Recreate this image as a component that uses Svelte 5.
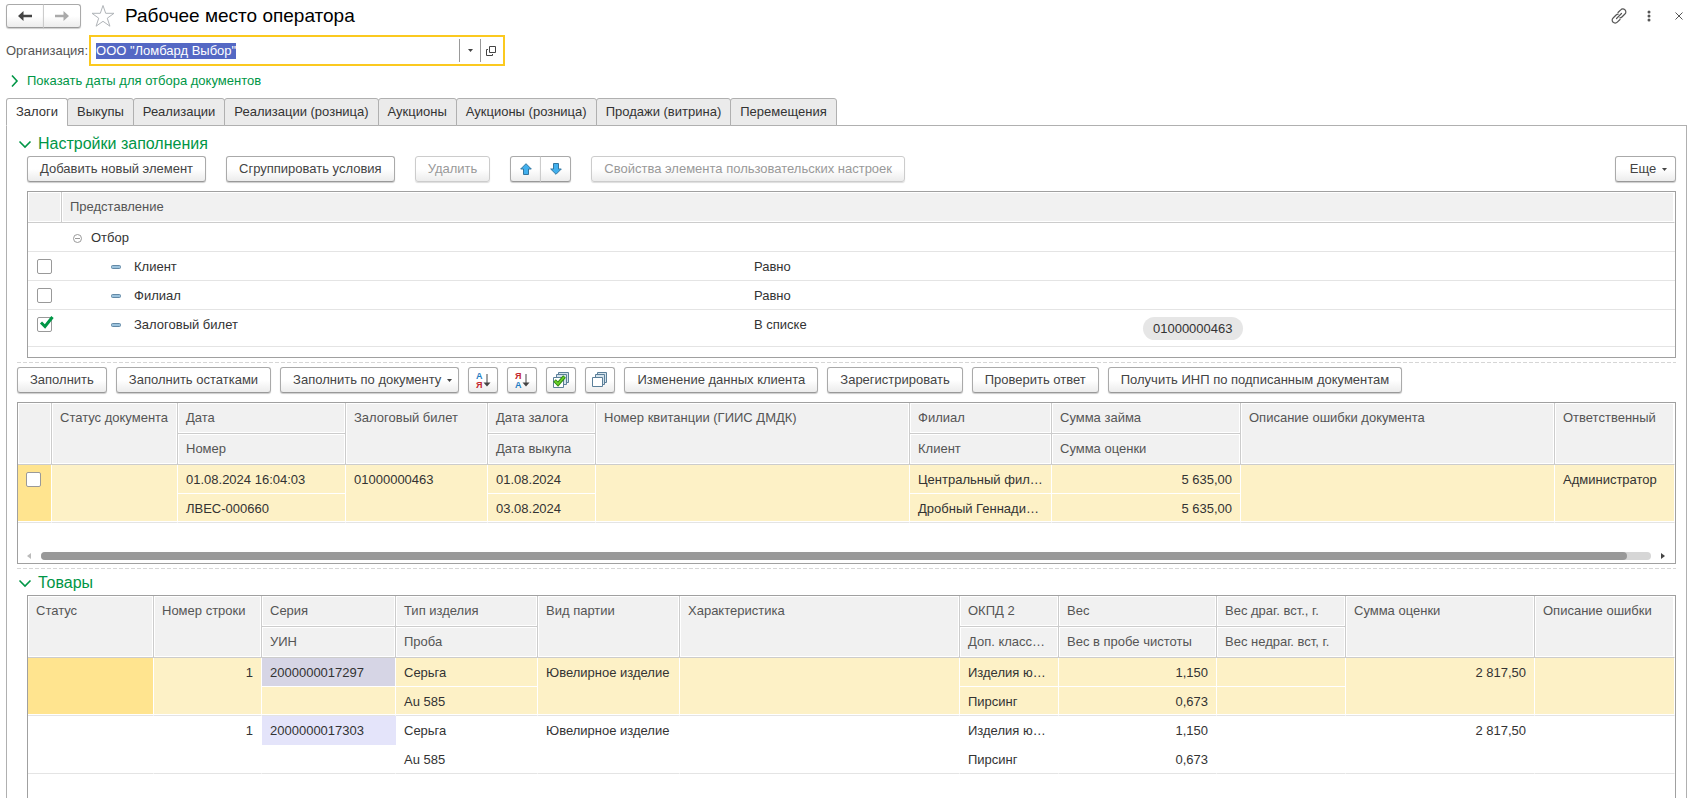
<script>
  const tabs = [
    'Залоги',
    'Выкупы',
    'Реализации',
    'Реализации (розница)',
    'Аукционы',
    'Аукционы (розница)',
    'Продажи (витрина)',
    'Перемещения'
  ];
  let activeTab = 'Залоги';

  let organization = 'ООО "Ломбард Выбор"';

  const filters = [
    { name: 'Клиент', op: 'Равно', value: '', on: false },
    { name: 'Филиал', op: 'Равно', value: '', on: false },
    { name: 'Залоговый билет', op: 'В списке', value: '01000000463', on: true }
  ];

  // bottom: undefined means that the column spans both header lines
  const docColumns = [
    { key: 'mark', top: '', width: 34 },
    { key: 'status', top: 'Статус документа', width: 126 },
    { key: 'date', top: 'Дата', bottom: 'Номер', width: 168 },
    { key: 'ticket', top: 'Залоговый билет', width: 142 },
    { key: 'pledge', top: 'Дата залога', bottom: 'Дата выкупа', width: 108 },
    { key: 'receipt', top: 'Номер квитанции (ГИИС ДМДК)', width: 314 },
    { key: 'branch', top: 'Филиал', bottom: 'Клиент', width: 142 },
    { key: 'sum', top: 'Сумма займа', bottom: 'Сумма оценки', width: 189, num: true },
    { key: 'error', top: 'Описание ошибки документа' },
    { key: 'user', top: 'Ответственный', width: 120 }
  ];
  const docs = [
    {
      date: ['01.08.2024 16:04:03', 'ЛВЕС-000660'],
      ticket: ['01000000463'],
      pledge: ['01.08.2024', '03.08.2024'],
      branch: ['Центральный фил…', 'Дробный Геннади…'],
      sum: ['5 635,00', '5 635,00'],
      user: ['Администратор']
    }
  ];

  const goodsColumns = [
    { key: 'status', top: 'Статус', width: 126 },
    { key: 'line', top: 'Номер строки', width: 108, num: true },
    { key: 'series', top: 'Серия', bottom: 'УИН', width: 134 },
    { key: 'type', top: 'Тип изделия', bottom: 'Проба', width: 142 },
    { key: 'batch', top: 'Вид партии', width: 142 },
    { key: 'feature', top: 'Характеристика' },
    { key: 'okpd', top: 'ОКПД 2', bottom: 'Доп. класс…', width: 99 },
    { key: 'weight', top: 'Вес', bottom: 'Вес в пробе чистоты', width: 158, num: true },
    { key: 'stones', top: 'Вес драг. вст., г.', bottom: 'Вес недраг. вст, г.', width: 129 },
    { key: 'sum', top: 'Сумма оценки', width: 189, num: true },
    { key: 'error', top: 'Описание ошибки', width: 140 }
  ];
  const goods = ['2000000017297', '2000000017303'].map((series) => ({
    line: ['1'],
    series: [series, ''],
    type: ['Серьга', 'Au 585'],
    batch: ['Ювелирное изделие'],
    okpd: ['Изделия ю…', 'Пирсинг'],
    weight: ['1,150', '0,673'],
    sum: ['2 817,50']
  }));

  function selectAll(node) {
    node.focus();
    node.select();
  }
</script>

{#snippet chevron(open)}
  <svg class="chevron" viewBox="0 0 14 14" width="14" height="14" fill="none" stroke="currentColor" stroke-width="1.6" aria-hidden="true">
    {#if open}
      <path d="M1.5 4.5 7 10l5.500-5.500" />
    {:else}
      <path d="M5 1.500 10 7l-5 5.500" />
    {/if}
  </svg>
{/snippet}

{#snippet caret()}
  <svg class="caret" viewBox="0 0 5 3" width="5" height="3" aria-hidden="true"><path d="M0 0h5L2.500 3z" fill="#444" /></svg>
{/snippet}

{#snippet checkbox(checked, label)}
  <span class="check">
    <input type="checkbox" {checked} aria-label={label} />
    {#if checked}
      <svg viewBox="0 0 16 16" width="16" height="16" fill="none" stroke="#009646" stroke-width="3" aria-hidden="true">
        <path d="M3 7.500 7 11.500 14.500 2" />
      </svg>
    {/if}
  </span>
{/snippet}

{#snippet grid(columns, rows)}
  <table class="grid">
    <colgroup>
      {#each columns as col}
        <col style={col.width ? `width: ${col.width}px` : ''} />
      {/each}
    </colgroup>
    <thead>
      <tr>
        {#each columns as col}
          <th rowspan={col.bottom ? 1 : 2} aria-label={col.top || 'Отметка'}>{col.top}</th>
        {/each}
      </tr>
      <tr>
        {#each columns.filter((c) => c.bottom) as col}
          <th>{col.bottom}</th>
        {/each}
      </tr>
    </thead>
    <tbody>
      {#each rows as row, i}
        <tr class:selected={i === 0}>
          {#each columns as col, c}
            <td
              rowspan={col.bottom ? 1 : 2}
              class:num={col.num}
              class:half={col.bottom}
              class:current={i === 0 && c === 0}
              class:series={col.key === 'series'}
            >
              {#if col.key === 'mark'}
                {@render checkbox(false, 'Отметить документ')}
              {:else}
                {row[col.key]?.[0] ?? ''}
              {/if}
            </td>
          {/each}
        </tr>
        <tr class:selected={i === 0}>
          {#each columns.filter((c) => c.bottom) as col}
            <td class:num={col.num}>{row[col.key]?.[1] ?? ''}</td>
          {/each}
        </tr>
      {/each}
    </tbody>
  </table>
{/snippet}

<div class="page">
  <header class="titlebar">
    <div class="pair">
      <button class="btn" type="button" aria-label="Назад">
        <svg viewBox="0 0 14 10" width="14" height="10" aria-hidden="true"><path d="M0 5 5.500 0v3.700H14v2.600H5.500V10z" fill="#444" /></svg>
      </button>
      <button class="btn" type="button" aria-label="Вперед">
        <svg viewBox="0 0 14 10" width="14" height="10" aria-hidden="true"><path d="M14 5 8.500 0v3.700H0v2.600h8.500V10z" fill="#aaa" /></svg>
      </button>
    </div>
    <button class="plain star" type="button" aria-label="В избранное">
      <svg viewBox="0 0 24 24" width="24" height="24" fill="none" stroke="#b0b4b8" aria-hidden="true">
        <path d="M12 1.500 14.700 9.300h8.300l-6.700 4.900 2.600 8L12 17.300 5.100 22.200l2.600-8L1 9.300h8.300z" />
      </svg>
    </button>
    <h1>Рабочее место оператора</h1>
    <div class="window-tools">
      <button class="plain" type="button" aria-label="Получить ссылку">
        <svg viewBox="0 0 16 16" width="16" height="16" fill="none" stroke="#555" stroke-width="1.200" stroke-linecap="round" aria-hidden="true">
          <path d="M7 4.500 9.700 1.800a2.800 2.800 0 0 1 4.200 0 2.800 2.800 0 0 1 0 4.200l-3 3a2.800 2.800 0 0 1-2 .8" />
          <path d="M9 11.500l-2.700 2.700a2.800 2.800 0 0 1-4.200 0 2.800 2.800 0 0 1 0-4.200l3-3a2.800 2.800 0 0 1 2-.8" />
          <path d="M5.500 10.500l5-5" />
        </svg>
      </button>
      <button class="plain" type="button" aria-label="Меню">
        <svg viewBox="0 0 4 12" width="4" height="12" fill="#555" aria-hidden="true">
          <circle cx="2" cy="2" r="1.500" /><circle cx="2" cy="6" r="1.500" /><circle cx="2" cy="10" r="1.500" />
        </svg>
      </button>
      <button class="plain" type="button" aria-label="Закрыть">
        <svg viewBox="0 0 8 8" width="8" height="8" stroke="#555" aria-hidden="true"><path d="M.5.5l7 7M7.500.5l-7 7" /></svg>
      </button>
    </div>
  </header>

  <div class="org">
    <label for="organization">Организация:</label>
    <div class="field">
      <input id="organization" type="text" bind:value={organization} use:selectAll />
      <button class="plain" type="button" aria-label="Выбрать из списка">{@render caret()}</button>
      <button class="plain" type="button" aria-label="Открыть">
        <svg viewBox="0 0 10 10" width="10" height="10" fill="none" stroke="#444" aria-hidden="true">
          <path d="M3.500.5h6v6h-6z" /><path d="M2 3.500H.5v6h6V8" />
        </svg>
      </button>
    </div>
  </div>

  <a class="toggle dates" href="#dates">{@render chevron(false)}Показать даты для отбора документов</a>

  <div class="tabs" role="tablist">
    {#each tabs as tab}
      <button
        type="button"
        role="tab"
        class:active={tab === activeTab}
        aria-selected={tab === activeTab}
        on:click={() => (activeTab = tab)}>{tab}</button>
    {/each}
  </div>

  <main class="panel">
    <h2 class="toggle">{@render chevron(true)}Настройки заполнения</h2>
    <div class="toolbar settings indent">
      <button class="btn" type="button">Добавить новый элемент</button>
      <button class="btn" type="button">Сгруппировать условия</button>
      <button class="btn" type="button" disabled>Удалить</button>
      <div class="pair narrow">
        <button class="btn" type="button" aria-label="Вверх">
          <svg viewBox="0 0 12 12" width="12" height="12" fill="#41b0ee" stroke="#33769f" aria-hidden="true"><path d="M6 .7 11.300 6H8.500v5.500h-5V6H.7z" /></svg>
        </button>
        <button class="btn" type="button" aria-label="Вниз">
          <svg viewBox="0 0 12 12" width="12" height="12" fill="#41b0ee" stroke="#33769f" aria-hidden="true"><path d="M6 11.300.7 6h2.800V.5h5V6h2.800z" /></svg>
        </button>
      </div>
      <button class="btn" type="button" disabled>Свойства элемента пользовательских настроек</button>
      <button class="btn menu more" type="button">Еще {@render caret()}</button>
    </div>

    <div class="frame filters indent">
      <table>
        <colgroup>
          <col class="col-mark" />
          <col />
          <col class="col-op" />
          <col class="col-value" />
        </colgroup>
        <thead>
          <tr>
            <th aria-label="Использование"></th>
            <th colspan="3">Представление</th>
          </tr>
        </thead>
        <tbody>
          <tr>
            <td></td>
            <td colspan="3">
              <span class="group">
                <svg viewBox="0 0 9 9" width="9" height="9" fill="none" stroke="#999" aria-hidden="true"><circle cx="4.500" cy="4.500" r="4" /><path d="M2 4.500h5" /></svg>
                Отбор
              </span>
            </td>
          </tr>
          {#each filters as filter}
            <tr class:tall={filter.value}>
              <td class="mark">{@render checkbox(filter.on, filter.name)}</td>
              <td>
                <span class="leaf">
                  <svg viewBox="0 0 10 4" width="10" height="4" aria-hidden="true"><rect x=".5" y=".5" width="9" height="3" rx="1" fill="#9cc3dd" stroke="#6389a6" /></svg>
                  {filter.name}
                </span>
              </td>
              <td>{filter.op}</td>
              <td>{#if filter.value}<span class="chip">{filter.value}</span>{/if}</td>
            </tr>
          {/each}
        </tbody>
      </table>
    </div>

    <div class="splitter"></div>

    <div class="toolbar">
      <button class="btn" type="button">Заполнить</button>
      <button class="btn" type="button">Заполнить остатками</button>
      <button class="btn menu" type="button">Заполнить по документу {@render caret()}</button>
      <button class="btn icon" type="button" aria-label="Сортировать по возрастанию">
        <svg viewBox="0 0 16 18" width="16" height="18" aria-hidden="true">
          <text x="1" y="8" class="letter" fill="#1f7fc4">А</text>
          <text x="1" y="17" class="letter" fill="#c4262e">Я</text>
          <path d="M12 3v11" stroke="#444" /><path d="M8.500 11.500h7L12 15.500z" fill="#444" />
        </svg>
      </button>
      <button class="btn icon" type="button" aria-label="Сортировать по убыванию">
        <svg viewBox="0 0 16 18" width="16" height="18" aria-hidden="true">
          <text x="1" y="8" class="letter" fill="#c4262e">Я</text>
          <text x="1" y="17" class="letter" fill="#1f7fc4">А</text>
          <path d="M12 3v11" stroke="#444" /><path d="M8.500 11.500h7L12 15.500z" fill="#444" />
        </svg>
      </button>
      <button class="btn icon" type="button" aria-label="Установить флажки">
        <svg viewBox="0 0 16 16" width="16" height="16" fill="#d5e3ec" stroke="#5b7f99" aria-hidden="true">
          <path d="M5.500.5h10v10h-10z" /><path d="M3.500 2.500h10v10h-10z" /><path d="M.5 5.500h10v10H.5z" fill="#fff" />
          <path d="M1.500 8.500 5 12 11.500 4.500" fill="none" stroke="#2f8a12" stroke-width="3.600" />
          <path d="M2 9 5 12 11 5" fill="none" stroke="#6bd12c" stroke-width="1.800" />
        </svg>
      </button>
      <button class="btn icon" type="button" aria-label="Снять флажки">
        <svg viewBox="0 0 16 16" width="16" height="16" fill="#d5e3ec" stroke="#5b7f99" aria-hidden="true">
          <path d="M5.500.5h9v10h-9z" /><path d="M3.500 2.500h9v10h-9z" /><path d="M.5 5.500h10v9H.5z" fill="#fff" />
        </svg>
      </button>
      <button class="btn" type="button">Изменение данных клиента</button>
      <button class="btn" type="button">Зарегистрировать</button>
      <button class="btn" type="button">Проверить ответ</button>
      <button class="btn" type="button">Получить ИНП по подписанным документам</button>
    </div>

    <div class="frame">
      {@render grid(docColumns, docs)}
      <div class="scroll" aria-hidden="true">
        <svg viewBox="0 0 4 6" width="4" height="6"><path d="M4 0v6L0 3z" fill="#bbb" /></svg>
        <div class="track"><div class="thumb"></div></div>
        <svg viewBox="0 0 4 6" width="4" height="6"><path d="M0 0v6l4-3z" fill="#444" /></svg>
      </div>
    </div>

    <div class="splitter"></div>

    <h2 class="toggle">{@render chevron(true)}Товары</h2>
    <div class="frame rest indent">
      {@render grid(goodsColumns, goods)}
    </div>
  </main>
</div>

<style>
  :global(body) {
    background: #fff;
  }
  .page {
    display: flex;
    flex-direction: column;
    box-sizing: border-box;
    height: 100vh;
    padding: 4px 6px 0;
    overflow: hidden;
    color: #333;
    font: 13px/16px "Liberation Sans", Arial, sans-serif;
  }
  button,
  input {
    font: inherit;
    color: inherit;
  }
  svg {
    display: block;
    flex: none;
  }
  .plain {
    display: flex;
    align-items: center;
    justify-content: center;
    padding: 0;
    background: none;
    border: 0;
  }

  .btn {
    display: flex;
    align-items: center;
    justify-content: center;
    gap: 6px;
    box-sizing: border-box;
    height: 26px;
    padding: 0 12px;
    color: #444;
    white-space: nowrap;
    background: linear-gradient(#fff 50%, #ececec);
    border: 1px solid #aaa;
    border-bottom-color: #999;
    border-radius: 3px;
    box-shadow: 0 1px 1px #ccc;
  }
  .btn:disabled {
    color: #999;
    border-color: #ccc;
    box-shadow: 0 1px 1px #ddd;
  }
  .btn.icon {
    width: 30px;
    padding: 0;
  }
  .btn.menu {
    padding-right: 6px;
  }
  .pair {
    display: flex;
  }
  .pair .btn {
    width: 38px;
    height: 24px;
    padding: 0;
  }
  .pair .btn:first-child {
    border-radius: 3px 0 0 3px;
  }
  .pair .btn:last-child {
    border-left-color: #ccc;
    border-radius: 0 3px 3px 0;
    margin-left: -1px;
  }
  .pair.narrow .btn {
    width: 31px;
    height: 26px;
  }

  .titlebar {
    display: flex;
    align-items: center;
    height: 24px;
  }
  .star {
    margin: 0 10px;
  }
  h1 {
    margin: 0;
    color: #000;
    font-size: 19px;
    font-weight: normal;
    line-height: 24px;
  }
  .window-tools {
    display: flex;
    align-items: center;
    gap: 14px;
    margin-left: auto;
  }
  .window-tools .plain {
    width: 16px;
    height: 16px;
  }

  .org {
    display: flex;
    align-items: center;
    gap: 1px;
    margin-top: 7px;
    color: #555;
  }
  .field {
    display: flex;
    align-items: center;
    box-sizing: border-box;
    width: 416px;
    height: 31px;
    padding: 0 2px 0 5px;
    border: 2px solid #fbc91f;
  }
  .field input {
    flex: 1;
    min-width: 0;
    padding: 0;
    border: 0;
    outline: 0;
    color: #333;
  }
  .field input::selection {
    color: #fff;
    background: #5468c4;
  }
  .field .plain {
    width: 21px;
    height: 23px;
    border-left: 1px solid #999;
  }

  .toggle {
    display: flex;
    align-items: center;
    gap: 6px;
    color: #009646;
    text-decoration: none;
  }
  h2.toggle {
    margin: 0 0 2px 1px;
    font-size: 16px;
    font-weight: normal;
    line-height: 20px;
  }
  .dates {
    align-self: flex-start;
    margin: 7px 0 9px 1px;
  }

  .tabs {
    display: flex;
    position: relative;
    margin-bottom: -1px;
  }
  .tabs button {
    height: 28px;
    padding: 0 9px;
    white-space: nowrap;
    background: #ebebeb;
    border: 1px solid #b0b0b0;
    border-radius: 3px 3px 0 0;
  }
  .tabs button + button {
    margin-left: -1px;
  }
  .tabs .active {
    background: #fff;
    border-bottom-color: #fff;
  }

  .panel {
    display: flex;
    flex: 1;
    flex-direction: column;
    min-height: 0;
    padding: 8px 10px 0;
    border: 1px solid #b0b0b0;
    border-bottom: 0;
  }
  .indent {
    margin-left: 10px;
  }
  .toolbar {
    display: flex;
    gap: 9px;
    margin-bottom: 9px;
  }
  .settings {
    gap: 20px;
  }
  .more {
    min-width: 61px;
    margin-left: auto;
  }
  .letter {
    font: bold 9px "Liberation Sans", Arial, sans-serif;
  }

  .frame {
    flex: none;
    border: 1px solid #a0a0a0;
  }
  .rest {
    flex: 1;
    border-bottom: 0;
  }
  table {
    width: 100%;
    table-layout: fixed;
    border-collapse: separate;
    border-spacing: 0;
  }
  th,
  td {
    box-sizing: border-box;
    height: 29px;
    padding: 7px 8px 0;
    overflow: hidden;
    text-align: left;
    text-overflow: ellipsis;
    vertical-align: top;
    white-space: nowrap;
  }
  th {
    height: 31px;
    color: #555;
    font-weight: normal;
    background: #f1f1f1;
    border-right: 1px solid #ccc;
    border-bottom: 1px solid #ccc;
    box-shadow: inset 0 0 0 1px #fff;
  }
  tr:first-child th:last-child {
    border-right-color: #fff;
  }
  .num {
    text-align: right;
  }

  .grid td {
    border-right: 1px solid transparent;
    border-bottom: 1px solid #e4e4e4;
  }
  .grid td.half {
    border-bottom-color: transparent;
  }
  .grid .selected td {
    background: #fdf1c6;
    border-right-color: #fff;
    box-shadow: inset 0 -1px #fff;
  }
  .grid .selected td.half {
    border-bottom-color: #fff;
    box-shadow: none;
  }
  .grid .selected td.current {
    background: #ffe48f;
  }
  .grid td.series {
    background: #e4e4fa;
  }
  .grid .selected td.series {
    background: #d6d5e5;
  }

  .filters {
    height: 165px;
  }
  .col-mark {
    width: 34px;
  }
  .col-op {
    width: 389px;
  }
  .col-value {
    width: 540px;
  }
  .filters td {
    border-bottom: 1px solid #e4e4e4;
  }
  .mark {
    padding-left: 9px;
  }
  .filters .tall td {
    height: 37px;
  }
  .group,
  .leaf {
    display: flex;
    align-items: center;
    gap: 9px;
    padding-left: 3px;
  }
  .leaf {
    gap: 13px;
    padding-left: 41px;
  }
  .chip {
    display: inline-block;
    padding: 0 10px;
    line-height: 23px;
    background: #e6e6e6;
    border-radius: 12px;
  }

  .check {
    display: block;
    position: relative;
    width: 15px;
    height: 15px;
  }
  .check input {
    display: block;
    box-sizing: border-box;
    width: 15px;
    height: 15px;
    margin: 0;
    appearance: none;
    background: #fff;
    border: 1px solid #999;
    border-radius: 2px;
  }
  .check svg {
    position: absolute;
    top: -2px;
    left: 1px;
    pointer-events: none;
  }

  .splitter {
    height: 1px;
    flex: none;
    margin: 4px 0;
    background: repeating-linear-gradient(90deg, #d6d6d6 0 4px, #fff 4px 6px);
  }
  .scroll {
    display: flex;
    align-items: center;
    gap: 10px;
    padding: 29px 10px 3px 9px;
  }
  .track {
    flex: 1;
    height: 8px;
    background: #d6d6d6;
    border-radius: 4px;
  }
  .thumb {
    width: 98.5%;
    height: 8px;
    background: #999;
    border-radius: 4px;
  }
</style>
